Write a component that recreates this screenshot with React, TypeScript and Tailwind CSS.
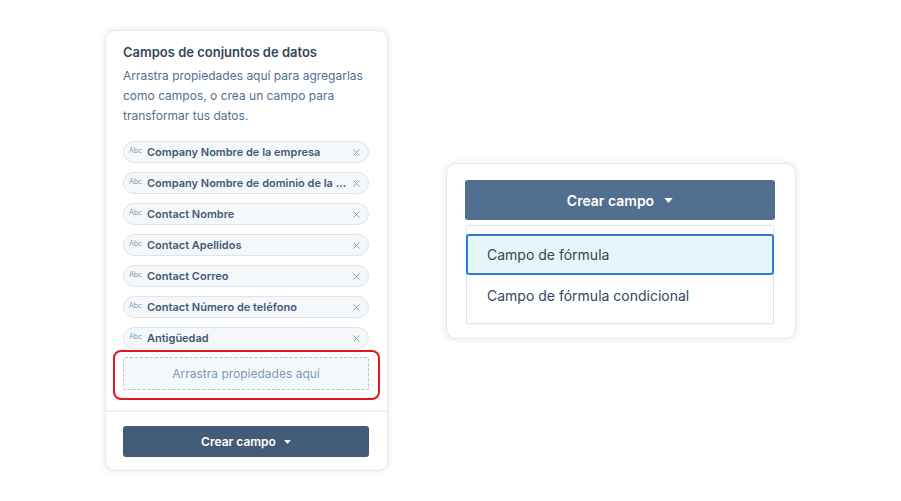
import { X } from 'lucide-react'

const FIELDS = [
  'Company Nombre de la empresa',
  'Company Nombre de dominio de la empresa',
  'Contact Nombre',
  'Contact Apellidos',
  'Contact Correo',
  'Contact Número de teléfono',
  'Antigüedad',
]

function Caret({ className }: { className?: string }) {
  return (
    <svg viewBox="0 0 10 6" className={className} fill="currentColor">
      <path d="M0 0h10L5 6z" />
    </svg>
  )
}

function FieldPill({ label }: { label: string }) {
  return (
    <div className="flex h-[22px] items-center rounded-full border border-[#dfe3eb] bg-[#f5f8fa] pl-[5px] pr-[6px]">
      <span className="w-[18px] shrink-0 text-[7px] leading-none text-[#7c98b6] -mt-[4px]">Abc</span>
      <span className="min-w-0 flex-1 truncate text-[11px] font-semibold text-[#425b76]">{label}</span>
      <X className="ml-1 h-[11px] w-[11px] shrink-0 text-[#7c98b6]" strokeWidth={2} />
    </div>
  )
}

export default function App() {
  return (
    <div
      className="flex h-[501px] w-[901px] items-start bg-white pl-[105px] pt-[30px]"
      style={{ fontFamily: 'Inter, "Noto Sans", sans-serif' }}
    >
      {/* Left card: dataset fields */}
      <div className="flex w-[283px] flex-col rounded-[10px] border border-[#e6e8eb] bg-white shadow-[0_0_4px_3px_rgba(0,0,0,0.045)]">
        <div className="pl-[17px] pr-[18px] pt-[12px]">
          <h2 className="text-[13px] font-semibold leading-[18px] text-[#33475b]">Campos de conjuntos de datos</h2>
          <p className="mt-[5px] text-[12px] leading-[20px] text-[#516f90]">
            Arrastra propiedades aquí para agregarlas como campos, o crea un campo para transformar tus datos.
          </p>
          <div className="mt-[15px] flex flex-col gap-[9px]">
            {FIELDS.map((f) => (
              <FieldPill key={f} label={f} />
            ))}
          </div>
          <div className="relative mt-[8px]">
            <div className="flex h-[33px] items-center justify-center rounded-[2px] border border-dashed border-[#b5c5d8] bg-[#f5f8fa] text-[12px] text-[#7c98b6]">
              Arrastra propiedades aquí
            </div>
            <div className="pointer-events-none absolute -bottom-[10px] -left-[10px] -right-[11px] -top-[7px] rounded-[8px] border-2 border-[#e3161b]" />
          </div>
        </div>
        <div className="mt-[20px] h-[2px] bg-[#eef1f5]" />
        <div className="pb-[13px] pl-[17px] pr-[18px] pt-[14px]">
          <button className="flex h-[31px] w-full items-center justify-center gap-[8px] rounded-[3px] bg-[#425b76] text-[12px] font-semibold text-white">
            Crear campo
            <Caret className="h-[4px] w-[7px]" />
          </button>
        </div>
      </div>

      {/* Right card: create field dropdown */}
      <div className="ml-[58px] mt-[133px] w-[350px] rounded-[10px] border border-[#e6e8eb] bg-white pb-[14px] pl-[18px] pr-[20px] pt-[16px] shadow-[0_0_4px_3px_rgba(0,0,0,0.045)]">
        <button className="flex h-[40px] w-full items-center justify-center gap-[10px] rounded-[3px] bg-[#516f90] text-[14px] font-semibold text-white">
          Crear campo
          <Caret className="h-[5px] w-[9px]" />
        </button>
        <div className="mx-[1px] mt-[5px] rounded-[3px] border border-[#dfe3eb] bg-white pb-[7px] pt-[8px] shadow-[0_1px_3px_rgba(0,0,0,0.04)]">
          <div className="-mx-[1px] flex h-[41px] items-center rounded-[3px] border-2 border-[#2d7bd8] bg-[#e5f5f8] px-[19px] text-[14px] text-[#33475b]">
            Campo de fórmula
          </div>
          <div className="flex h-[41px] items-center px-[20px] text-[14px] text-[#33475b]">
            Campo de fórmula condicional
          </div>
        </div>
      </div>
    </div>
  )
}
